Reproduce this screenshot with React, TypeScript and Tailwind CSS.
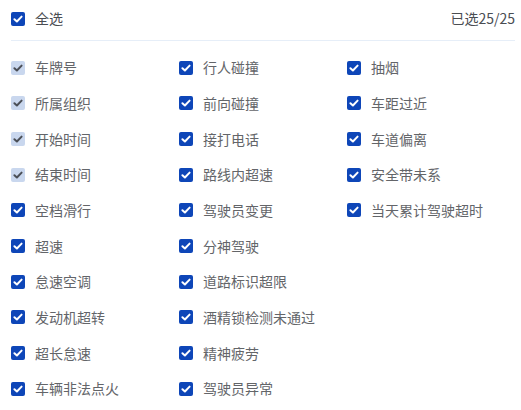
import React from "react";

const columns: { label: string; disabled?: boolean }[][] = [
  [
    { label: "车牌号", disabled: true },
    { label: "所属组织", disabled: true },
    { label: "开始时间", disabled: true },
    { label: "结束时间", disabled: true },
    { label: "空档滑行" },
    { label: "超速" },
    { label: "怠速空调" },
    { label: "发动机超转" },
    { label: "超长怠速" },
    { label: "车辆非法点火" },
  ],
  [
    { label: "行人碰撞" },
    { label: "前向碰撞" },
    { label: "接打电话" },
    { label: "路线内超速" },
    { label: "驾驶员变更" },
    { label: "分神驾驶" },
    { label: "道路标识超限" },
    { label: "酒精锁检测未通过" },
    { label: "精神疲劳" },
    { label: "驾驶员异常" },
  ],
  [
    { label: "抽烟" },
    { label: "车距过近" },
    { label: "车道偏离" },
    { label: "安全带未系" },
    { label: "当天累计驾驶超时" },
  ],
];

function Check({ disabled }: { disabled?: boolean }) {
  return (
    <span
      className={
        "flex h-[14px] w-[14px] shrink-0 items-center justify-center rounded-[2px] " +
        (disabled ? "bg-[#c9d7ee]" : "bg-[#0e46b8]")
      }
    >
      <svg width="14" height="14" viewBox="0 0 14 14" fill="none">
        <path
          d="M3.4 7.2 L5.9 9.5 L10.6 4.6"
          stroke={disabled ? "#4b4f57" : "#ffffff"}
          strokeWidth="2"
          strokeLinecap="round"
          strokeLinejoin="round"
        />
      </svg>
    </span>
  );
}

export default function App() {
  return (
    <div
      className="h-[410px] w-[521px] bg-white pl-[11px] pr-[6px] text-[14px] text-[#636569]"
      style={{ fontFamily: '"Noto Sans CJK SC", Roboto, sans-serif' }}
    >
      <div className="flex h-[41px] items-center justify-between border-b border-[#e6eef8] pb-[3px]">
        <div className="flex items-center gap-[10px]">
          <Check />
          <span className="text-[#4a4d52]">全选</span>
        </div>
        <span className="text-[#4a4d52]">已选25/25</span>
      </div>
      <div className="grid grid-cols-3 pt-[9px]">
        {columns.map((col, i) => (
          <div key={i} className="flex flex-col">
            {col.map((item) => (
              <div key={item.label} className="flex h-[35.67px] items-center gap-[10px]">
                <Check disabled={item.disabled} />
                <span>{item.label}</span>
              </div>
            ))}
          </div>
        ))}
      </div>
    </div>
  );
}
